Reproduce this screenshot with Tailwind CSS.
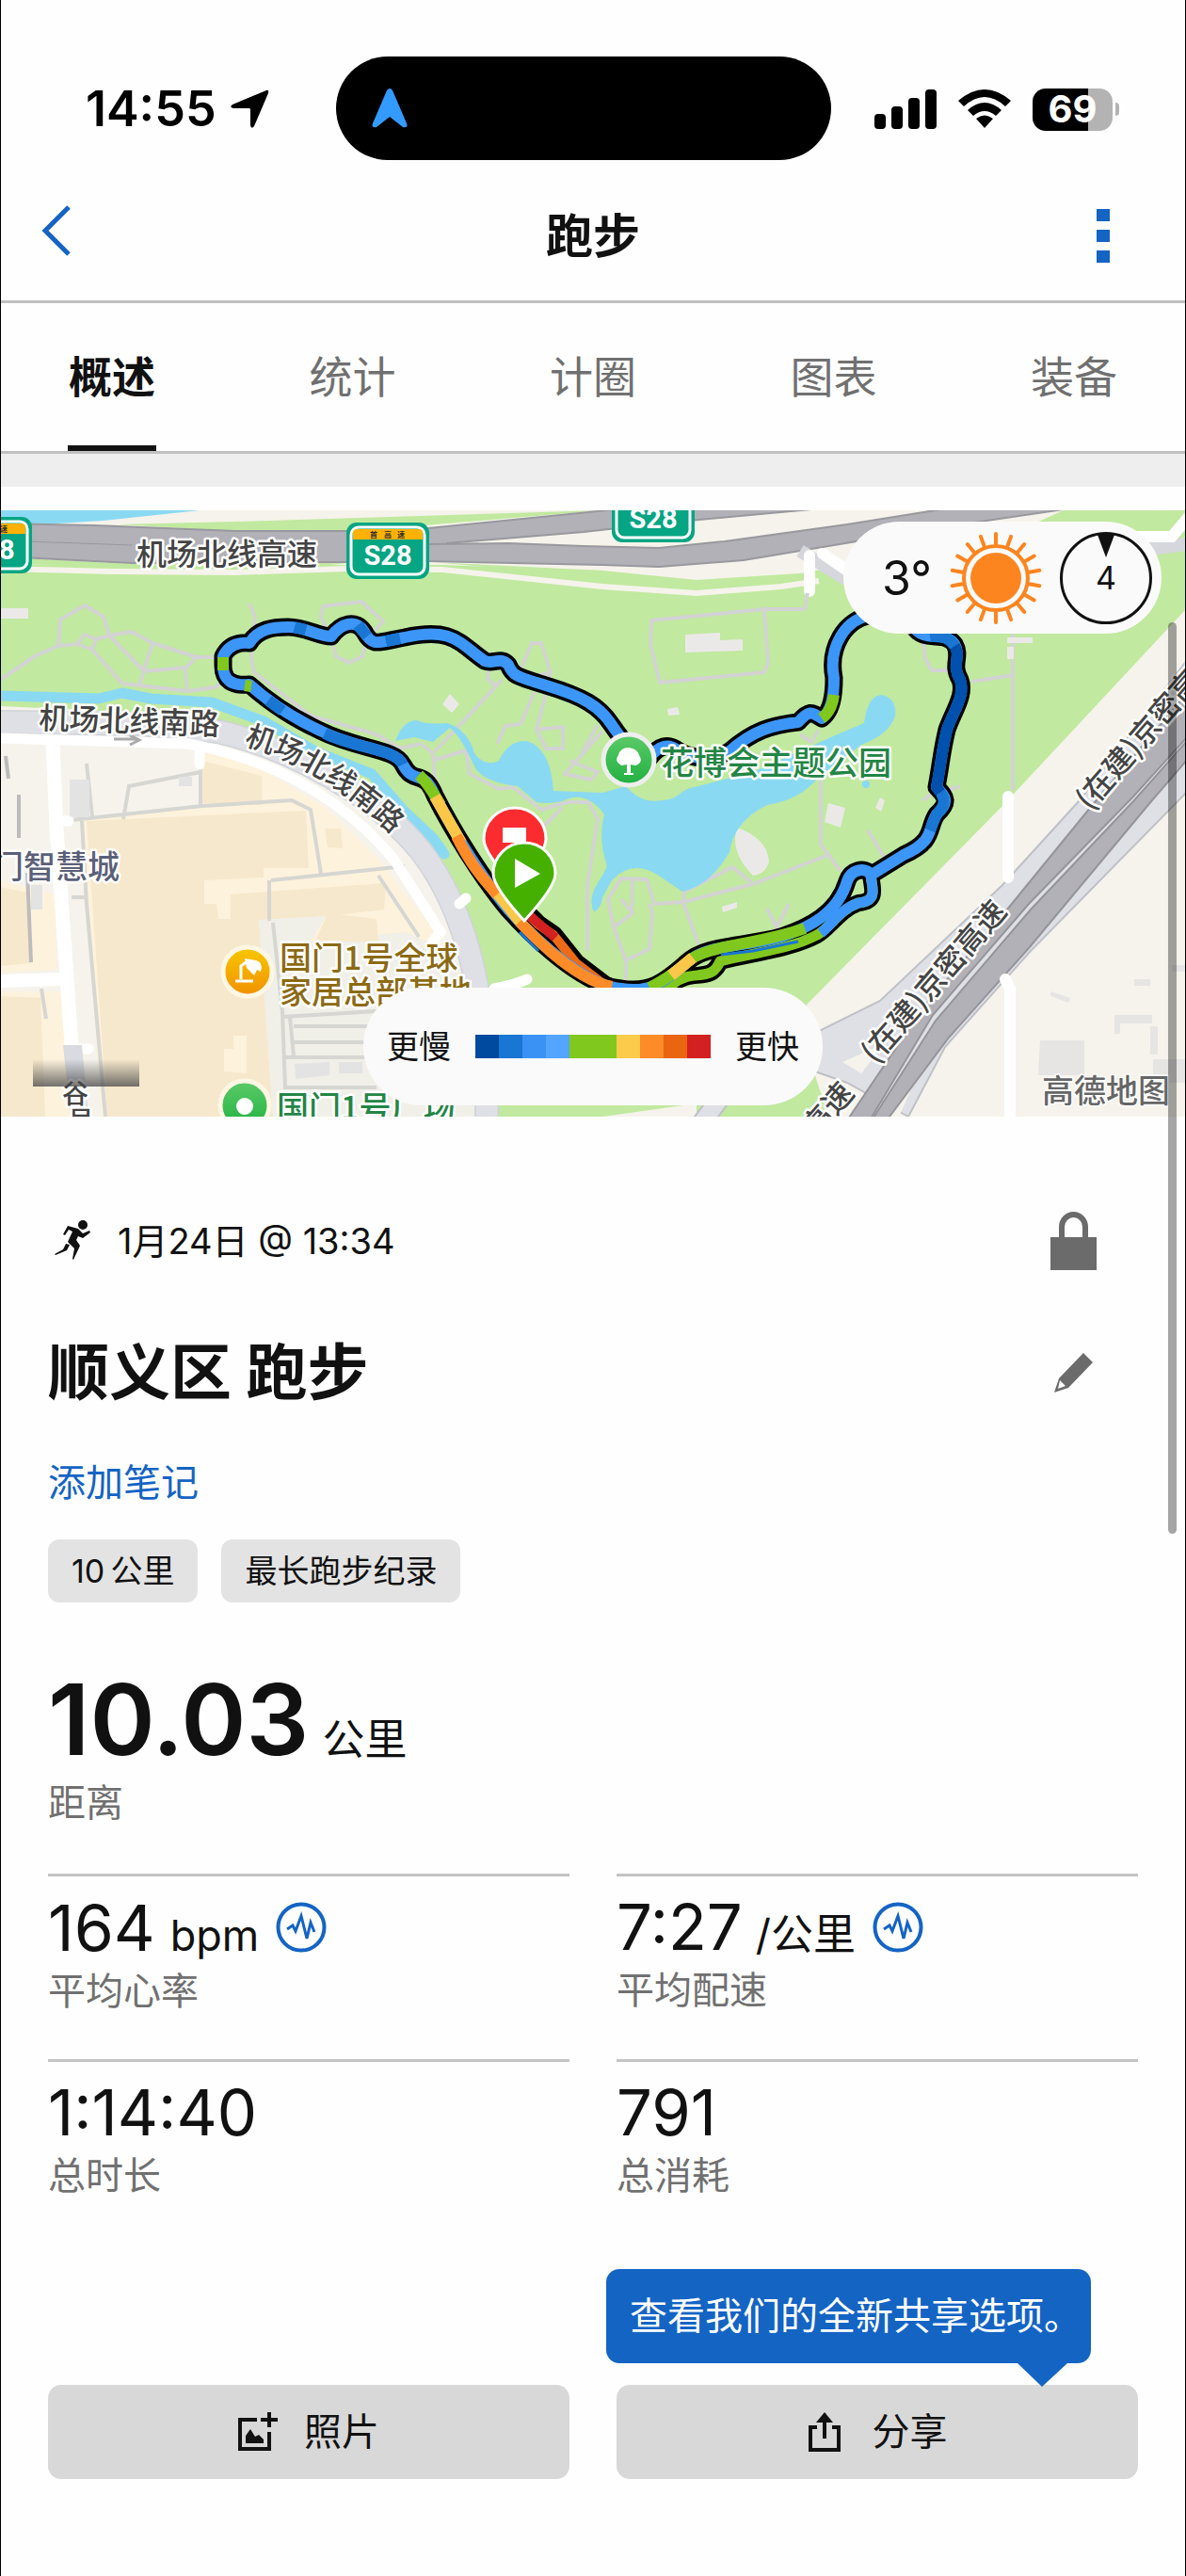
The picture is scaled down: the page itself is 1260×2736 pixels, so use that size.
<!DOCTYPE html>
<html lang="zh-CN">
<head>
<meta charset="utf-8">
<meta name="viewport" content="width=device-width, initial-scale=1">
<title>跑步</title>
<script src="https://cdn.jsdelivr.net/npm/@tailwindcss/browser@4"></script>
</head>
<body class="bg-white font-['Inter','Noto_Sans_CJK_SC',sans-serif] text-[#111]">
<div class="relative flex min-h-screen flex-col border-x border-black bg-[#fefefe]">

  <!-- Status bar -->
  <div class="relative flex h-[194px] items-center justify-between pt-[38px] pr-[70px] pl-[90px]">
    <div class="flex items-center gap-[14px] text-[52px] leading-none font-semibold text-black">
      <span>14:55</span>
      <svg class="h-[42px] w-[42px]" viewBox="0 0 42 42"><path d="M39 1 Q42 0 41 4 L26 39 Q23 43 22 38 V21 Q22 20 20 20 H4 Q-1 19 3 16 Z"/></svg>
    </div>
    <div class="absolute top-[60px] left-1/2 flex h-[110px] w-[526px] -translate-x-[273px] items-center rounded-full bg-black pl-[38px]">
      <svg class="h-[42px] w-[38px]" viewBox="0 0 38 42"><path fill="#339bff" d="M16 2 Q19 -2 22 2 L37 37 Q39 42 33 41 L19 30 L5 41 Q-1 42 1 37 Z"/></svg>
    </div>
    <div class="flex items-center gap-[22px]">
      <svg class="h-[42px] w-[66px]" viewBox="0 0 66 42"><rect y="26" width="12" height="16" rx="4"/><rect x="18" y="18" width="12" height="24" rx="4"/><rect x="36" y="9" width="12" height="33" rx="4"/><rect x="54" width="12" height="42" rx="4"/></svg>
      <svg class="h-[42px] w-[58px]" viewBox="0 0 58 42"><path d="M1 12 Q29 -12 57 12 L51 18 Q29 -2 7 18Z M11 22 Q29 6 47 22 L41 28 Q29 18 17 28Z M20 31 Q29 24 38 31 L29 41Z"/></svg>
      <div class="flex items-center gap-[3px]">
        <div class="flex h-[45px] w-[85px] items-center justify-center rounded-[14px] bg-linear-to-r from-black from-69% to-[#b3b3b3] to-69% text-[40px] leading-none font-bold text-white">69</div>
        <div class="h-[14px] w-[4px] rounded-r-full bg-[#b3b3b3]"></div>
      </div>
    </div>
  </div>

  <!-- Title bar -->
  <header class="flex h-[128px] items-center justify-between border-b-[3px] border-[#c0c0c0] px-[42px] pb-[12px]">
    <button aria-label="返回" class="w-[60px] pb-[12px]"><svg class="h-[56px] w-[32px]" viewBox="0 0 32 56" fill="none" stroke="#1464c4" stroke-width="5"><path d="M30 3 L5 28 L30 53"/></svg></button>
    <h1 class="text-[50px] leading-[60px] font-bold">跑步</h1>
    <button aria-label="更多" class="flex w-[60px] pl-[8px]"><svg class="h-[58px] w-[14px]" viewBox="0 0 14 58" fill="#1464c4"><path d="M0 0h14v13H0z M0 22h14v13H0z M0 44h14v13H0z"/></svg></button>
  </header>

  <!-- Tabs -->
  <nav class="flex h-[160px] justify-between border-b-[3px] border-[#c0c0c0] px-[71px] text-[46px] leading-[157px] text-[#707070]">
    <a href="#" class="flex w-[94px] justify-center border-b-[6px] border-[#111] font-bold whitespace-nowrap text-[#111]">概述</a>
    <a href="#" class="flex w-[94px] justify-center whitespace-nowrap">统计</a>
    <a href="#" class="flex w-[94px] justify-center whitespace-nowrap">计圈</a>
    <a href="#" class="flex w-[94px] justify-center whitespace-nowrap">图表</a>
    <a href="#" class="flex w-[94px] justify-center whitespace-nowrap">装备</a>
  </nav>
  <div class="h-[35px] bg-[#eee]"></div>

  <!-- Route map -->
  <section class="relative mt-[25px]" aria-label="路线地图">
    <svg class="block h-[644px] w-full" viewBox="0 542 1260 644" preserveAspectRatio="xMidYMid slice">
      <defs>
        <linearGradient id="fade" x1="0" y1="0" x2="0" y2="1"><stop offset="0" stop-color="#444" stop-opacity="0"/><stop offset="1" stop-color="#444" stop-opacity=".75"/></linearGradient>
        <linearGradient id="park" x1="0" y1="0" x2="0" y2="1"><stop offset="0" stop-color="#5ccb68"/><stop offset="1" stop-color="#20b040"/></linearGradient>
        <linearGradient id="home" x1="0" y1="0" x2="0" y2="1"><stop offset="0" stop-color="#f8c800"/><stop offset="1" stop-color="#f09000"/></linearGradient>
        <path id="southroad" d="M259 791 Q347 816 427 896"/>
        <path id="loop" d="M237 707 V697 Q245 681 265 683 C274 668 290 666 306 666 C325 666 338 676 352 676 C362 662 378 657 387 671 C396 688 402 682 430 677 C480 666 487 682 515 702 C524 706 532 697 540 706 C545 718 548 718 580 728 C620 740 637 750 650 770 C665 792 672 800 690 805 Q705 785 720 797 Q745 812 775 798 C800 776 820 770 848 767 C860 754 862 756 873 763 C884 755 886 738 886 720 C880 690 896 655 930 653 L970 665 C982 684 1003 669 1014 684 C1022 698 1010 705 1020 722 C1026 738 1013 755 1006 775 C1000 800 1000 810 995 836 C1004 846 1010 851 995 865 C985 880 994 893 960 908 L926 929 C918 920 904 924 900 936 C890 970 860 985 830 995 C790 1006 750 1003 730 1022 C705 1044 690 1055 660 1050 C625 1048 575 1005 540 966 C510 930 480 880 462 845 C450 815 440 835 428 812 C420 795 380 796 340 776 C310 762 285 745 265 727 Q237 730 237 707"/>
        <path id="second" d="M925 929 C926 942 934 957 912 959 C892 966 880 987 868 993 C840 1008 800 1012 765 1021 C755 1045 735 1028 715 1045 L690 1056"/>
        <path id="third" d="M563 973 L572 982 L588 993 L612 1023 L642 1046 L670 1060"/>
      </defs>
      <rect y="542" width="1260" height="644" fill="#c1e99f"/>

      <!-- Northern strip and motorway -->
      <path fill="#f5f3eb" d="M0 542H1130L1090 560L900 600L850 609L740 616L640 606L470 600H0Z"/>
      <path fill="#8ad9f3" d="M0 542H212L110 553L45 557H0Z"/>
      <path fill="#c1e99f" d="M125 557L250 554L640 542L370 565L250 564Z M0 592L140 599L370 598L300 605L0 599Z M460 597L640 613V606Z M1105 553L1160 542H1240L1180 551Z"/>
      <g fill="#b1b1b7" stroke="#98989e" stroke-width="2">
        <path d="M0 556L100 558L250 564L370 564L455 561L655 541H862L700 556L620 565L475 577L455 597L370 597L140 598L0 591Z"/>
        <path d="M455 578L540 577L620 580L700 582L770 575L900 557L1000 541H1130L1000 560L850 585L790 595L700 602L640 600L455 596Z"/>
      </g>
      <path fill="none" stroke="#98989e" d="M0 574L140 579"/>
      <path fill="none" stroke="#f5f3eb" stroke-width="6" d="M0 604L120 607L250 608L370 604L470 605L640 623L740 630L830 623L870 617"/>
      <path fill="none" stroke="#d5d7dc" stroke-width="14" d="M850 585L920 628M1260 578L1215 584"/>
      <path fill="none" stroke="#fff" stroke-width="12" stroke-linecap="round" d="M860 590V628M874 588L900 606M1190 570H1245L1262 550"/>

      <!-- Park footpaths and buildings -->
      <g fill="none" stroke="#d3d3d3" stroke-width="4" stroke-linejoin="round">
        <path d="M0 722L37 697L62 686L64 658L90 643L110 655L116 675L140 671L162 683L209 698H232M62 686L82 684L98 690L130 726L148 728L200 734L228 730L245 720M98 690L102 679L90 674L82 684M102 679L116 675L153 713L197 709L209 698M162 683L148 728M197 709L199 734M265 641L271 655L267 700L270 714L330 760L400 780L425 795L447 790L460 800L462 827L500 905"/>
        <path d="M348 670L341 655L343 644L384 639L407 660L398 670M353 683L357 697L371 704L385 697L388 685M520 706L518 721L527 729L462 798M527 729L533 722M562 720L585 714L575 683L565 683L550 718M568 735L553 769L537 771L528 790M585 716L570 775L580 795H598V772L570 775M640 777L600 822L628 828L635 820L605 808M462 807L495 797L499 822L530 838L545 836L575 860L592 855L605 852H625L635 870L624 940V1010M597 858L575 880"/>
        <path d="M858 630L855 647H812L692 659L691 685L701 725L812 714L816 704L812 648M1076 673V840M1076 717L1032 724M980 675L983 700L990 712H1010M850 780L862 788L870 775M872 800V897L893 925M880 908L800 939L726 958M798 937L778 921L727 947L726 958L742 1003M726 958L695 960L687 934L660 933L646 955L652 985L665 1020V1045M665 1020L690 1008L693 970L690 960M660 955L672 970L652 985M672 935L671 970M815 965L825 985L838 960M825 985V995M922 882L940 911M635 770L618 800M998 838L980 850M705 825L700 830M1005 840L1020 835"/>
        <path d="M1082 1050L1096 1060L1102 1110L1095 1145L1075 1160M1210 1132L1225 1143L1260 1145"/>
      </g>
      <path fill="#ebe9e8" d="M0 646H30V657H0Z M728 674L765 672V680L789 679V691L728 693Z M470 748L478 737L488 748L480 757Z M709 753L720 751L722 759L710 760Z M1070 677H1097V683H1070Z M1070 687H1077V700H1070Z M876 873L880 853L898 858L893 879Z M930 858L935 847L940 850L936 862Z M783 879Q815 890 817 915Q814 928 800 930Q775 905 783 879Z M767 963L783 958V964L768 969Z"/>

      <!-- Lake and canal -->
      <g fill="#8ad9f3">
        <path d="M420 787Q428 765 443 765Q452 770 475 768Q497 775 504 800Q515 815 530 808Q540 786 560 787Q585 795 588 840L640 842L665 835Q690 865 730 838L800 820L885 782L918 768Q922 738 937 738Q953 742 951 760Q945 780 915 791L870 825Q850 850 815 855Q780 872 775 905Q755 940 725 947L700 930Q672 912 650 935L632 968Q622 965 645 920Q635 890 642 865Q625 842 605 848Q590 855 570 852L550 835Q510 830 503 812Q490 783 478 773L460 788L440 783Z"/>
        <path d="M640 930Q622 955 632 968Q642 962 640 940Z"/>
        <circle cx="920" cy="833" r="4"/>
      </g>
      <path fill="#c1e99f" d="M680 838Q705 862 728 838L735 825H675Z"/>
      <path fill="none" stroke="#8ad9f3" stroke-width="11" stroke-linecap="round" stroke-linejoin="round" d="M0 739L105 742L130 736L160 742L225 746L280 766L335 798L395 822L430 862L460 890L472 907"/>

      <!-- South-west blocks -->
      <path fill="#f5f3eb" d="M0 750L150 757L240 770L330 800L400 845L450 900L490 970L515 1030L522 1186H0Z"/>
      <path fill="#fdf2dc" d="M216 798L270 812L345 857L400 910L470 1000L480 1186H108L85 870L216 856Z M0 935L58 950L60 1030L0 1033Z M0 1053H65L75 1186H0Z"/>
      <path fill="#f6e8cc" d="M92 872L325 861L328 925L410 938L408 966L350 973L275 977L290 1186H114Z M214 808L278 824V855L214 853Z M0 942L28 948L33 1023L0 1026Z M0 1058L43 1060L48 1186H0Z M345 880H362L364 901L348 900Z"/>
      <path fill="#fdf2dc" d="M217 935L280 932V922H328L408 930V938L245 950V976H232L230 960H217Z M248 1100H262V1140L238 1138V1114H248Z"/>
      <path fill="#f0efe8" d="M275 977L346 973L330 1000L430 990L475 1010L510 1050L515 1186H290Z"/>
      <path fill="#f6e8cc" d="M348 970L400 976L402 1000H335Z"/>
      <g fill="none" stroke="#d6d6d2" stroke-width="4"><path d="M213 790V856M213 820L137 835L131 870M92 811L98 867M76 871L215 856L310 850L330 860L341 928M87 872L92 960L112 1186M288 935L430 920M402 930L445 995M286 978V935M290 980L300 1075L303 1155H400M300 1080L400 1074M308 1080L312 1122M312 1090H395M312 1107H390M300 1123H390M76 953H92M44 1050L49 1082"/></g>
      <path fill="#e3e3e3" d="M74 828H95V868H74Z M190 825H204V835H190Z M313 1130L350 1128V1142L314 1146Z M360 1128H385V1140H360Z M33 940H45V966H33Z"/>
      <path fill="none" stroke="#bcbcbc" stroke-width="4" d="M6 803L9 827M20 844V890M29 927L33 1022"/>
      <path fill="none" stroke="#d0d2d8" stroke-width="26" d="M0 767L150 769L232 777C310 795 400 845 448 905Q520 1000 517 1186"/>
      <path fill="none" stroke="#dfe0e6" stroke-width="23" d="M0 767L150 769L232 777C310 795 400 845 448 905Q520 1000 517 1186"/>
      <g fill="none" stroke="#fff" stroke-linecap="round">
        <path stroke-width="11" d="M0 784L200 790C310 810 380 865 420 915L468 990L460 1000"/>
        <path stroke-width="15" d="M56 790L60 880L76 1110"/>
        <path stroke-width="14" d="M0 1042L66 1040"/>
        <path stroke-width="11" d="M212 795V812M65 872H73M80 1114H94M488 960L495 954M525 1050Q550 1045 560 1040"/>
      </g>
      <path fill="#d9dbe1" d="M67 1110H87L94 1186H75Z"/>
      <path fill="none" stroke="#aaa" stroke-width="3" d="M121 785H147M138 781L148 786L138 791"/>

      <!-- South-east expressway -->
      <path fill="#f5f3eb" d="M1260 647L1064 857L857 1067L862 1130L880 1186H1260Z M640 1186L740 1172V1186Z"/>
      <path fill="#dfe0e6" stroke="#bfc0c6" stroke-width="2" d="M1262 700L1147 850L1065 940L935 1063L860 1100V1136L900 1150L965 1186L1004 1112L1095 1010L1262 840Z M735 1190L765 1150H790L760 1190Z"/>
      <path fill="#f5f3eb" d="M895 1128L940 1108L915 1140Z M955 1186L985 1120L945 1186Z M1012 1120L985 1190H1080V1100L1060 1060Z"/>
      <path fill="#c1e99f" d="M905 1186L925 1160L915 1186Z"/>
      <g fill="#b1b1b7" stroke="#94949a" stroke-width="2">
        <path d="M1262 735L1163 852L1061 977L983 1067L900 1190H924L991 1078L1093 960L1204 846L1262 782Z"/>
        <path d="M1262 786L1205 850L1095 966L994 1084L926 1190H942L1008 1102L1093 1007L1224 850L1262 806Z"/>
      </g>
      <path fill="none" stroke="#fff" stroke-width="12" stroke-linecap="round" d="M1071 846V932M1068 1040L1073 1050V1186"/>
      <path fill="#e6e5e4" d="M1105 1105H1152V1142H1103Z M1184 1078H1224V1087H1190V1098H1184Z M1222 1090H1230V1120H1222Z M1116 1053L1137 1060L1135 1065L1116 1058Z M1205 1040H1222V1047H1205Z M1225 1125H1260V1150H1225Z M1245 1025H1260V1032H1245Z"/>

      <!-- Recorded route, coloured by pace -->
      <g fill="none" stroke-linejoin="round" stroke-linecap="round">
        <use href="#third" stroke="#000" stroke-width="20"/>
        <use href="#second" stroke="#000" stroke-width="18"/>
        <use href="#loop" stroke="#000" stroke-width="19"/>
        <use href="#third" stroke="#ee6a16" stroke-width="10"/>
        <use href="#second" stroke="#80c81e" stroke-width="11"/>
        <use href="#loop" stroke="#3b96f7" stroke-width="12"/>
      </g>
      <g fill="none" stroke-width="12" stroke-linejoin="round">
        <path stroke="#0050ad" d="M1014 686C1022 698 1010 705 1020 722C1026 738 1013 755 1006 775C1000 800 1000 810 995 836L999 842"/>
        <path stroke="#1976d2" d="M988 676Q1006 673 1014 686M999 842Q1008 852 995 865L988 882M428 812C420 795 380 796 345 779M300 755L285 744M313 666L325 669M380 664L390 676M410 681L425 678"/>
        <path stroke="#80c81e" d="M237 712V698M260 728L267 729M886 738Q884 755 873 763M855 986C800 1005 750 1003 730 1022Q712 1038 690 1049M445 823Q455 832 468 855"/>
        <path stroke="#fbc748" d="M736 1017L713 1036M462 846L490 895M525 945L555 982"/>
        <path stroke="#fc8b28" d="M485 888C500 918 512 932 528 950M552 979C585 1014 620 1042 650 1048"/>
        <path stroke="#d32020" stroke-width="10" d="M563 973L590 996"/>
        <path stroke="#3b96f7" stroke-width="11" d="M925 929C926 942 934 957 912 959C892 966 884 982 872 991"/>
        <path stroke="#1976d2" stroke-width="3" d="M848 1000L800 1010L766 1014M552 990L572 1010"/>
      </g>

      <!-- Start and finish pins -->
      <g stroke="#fff" stroke-width="3">
        <path fill="#fb2c30" d="M547 941Q514 906 514 891A33 33 0 0 1 580 891Q580 906 547 941Z"/>
        <path fill="#fff" stroke="none" d="M534 879H559V895H534Z"/>
        <path fill="#45b000" d="M557 978Q524 942 524 928A33 33 0 0 1 590 928Q590 942 557 978Z"/>
      </g>
      <path fill="#fff" d="M547 912V943L574 928Z"/>

      <!-- Place icons -->
      <circle cx="668" cy="807" r="27" fill="url(#park)" stroke="#eee" stroke-width="5"/>
      <path fill="#fff" d="M668 794Q677 795 679 802Q684 810 675 813L670 812V821H673V823H663V821H666V812L660 813Q652 808 657 802Q659 794 668 794Z"/>
      <circle cx="263" cy="1032" r="26" fill="url(#home)" stroke="#fff6e4" stroke-width="5"/>
      <path d="M250 1042H269M256 1040V1026L264 1020" fill="none" stroke="#fff" stroke-width="3"/><path fill="#fff" d="M260 1018L272 1020Q280 1022 277 1032L273 1030L270 1036L262 1028Z"/>
      <circle cx="260" cy="1174" r="26" fill="url(#park)" stroke="#fff6e4" stroke-width="5"/><circle cx="260" cy="1175" r="9" fill="#fff"/>

      <!-- Road shields -->
      <g font-family="Roboto, sans-serif" font-weight="700" font-size="29" text-anchor="middle">
        <g id="shield"><rect x="368" y="555" width="88" height="60" rx="11" fill="#06a583"/><rect x="373" y="560" width="78" height="50" rx="8" fill="#06a583" stroke="#fff" stroke-width="3"/><path fill="#feb100" d="M375 573V566Q375 562 380 562H444Q449 562 449 566V573Z"/><text x="412" y="600" fill="#fff">S28</text><text x="397 412 426" y="571" font-size="8" fill="#333" font-family="Noto Sans CJK SC">首高速</text></g>
        <use href="#shield" x="-422" y="-6"/>
        <use href="#shield" x="282" y="-39"/>
      </g>

      <!-- Map labels -->
      <g font-family="Noto Sans CJK SC, sans-serif" font-weight="500" font-size="32" fill="#444" stroke="#fffffe" stroke-width="5" stroke-linejoin="round" paint-order="stroke">
        <text x="145" y="600">机场北线高速</text>
        <text x="41" y="774" transform="rotate(2 41 774)">机场北线南路</text>
        <text font-size="31"><textPath href="#southroad">机场北线南路</textPath></text>
        <text x="-9" y="933" font-size="34" fill="#5a6078">门智慧城</text>
        <text x="930" y="1131" transform="rotate(-49 930 1131)">(在建)京密高速</text>
        <text x="1158" y="862" transform="rotate(-49 1158 862)">(在建)京密高速</text>
        <text x="768" y="1324" transform="rotate(-49 768 1324)">(在建)京密高速</text>
        <text x="66" y="1172" font-size="28">谷</text><text x="72" y="1201" font-size="28">号</text>
        <g font-size="34" fill="#8c6a14"><text x="297" y="1030">国门1号全球</text><text x="297" y="1066">家居总部基地</text></g>
        <g fill="#238545"><text x="702" y="823" font-size="35">花博会主题公园</text><text x="294" y="1189" font-size="34">国门1号广场</text></g>
        <text x="1107" y="1171" font-size="34" fill="#666" stroke-width="3">高德地图</text>
      </g>
      <rect x="35" y="1125" width="113" height="29" fill="url(#fade)"/>
    </svg>

    <div class="absolute top-[12px] right-[25px] flex h-[119px] items-center gap-[19px] rounded-full bg-[#fafafa] pr-[10px] pl-[41px]">
      <span class="text-[50px] leading-none">3°</span>
      <svg class="h-[98px] w-[98px]" viewBox="-49 -49 98 98" fill="none" stroke="#fd851f" stroke-width="4" stroke-linecap="round">
        <circle r="27" fill="#fd851f" stroke="none"/><circle r="34"/>
        <path d="M0 -36V-47M0 36V47"/><path d="M0 -36V-47M0 36V47" transform="rotate(20)"/><path d="M0 -36V-47M0 36V47" transform="rotate(40)"/><path d="M0 -36V-47M0 36V47" transform="rotate(60)"/><path d="M0 -36V-47M0 36V47" transform="rotate(80)"/>
        <path d="M0 -36V-47M0 36V47" transform="rotate(100)"/><path d="M0 -36V-47M0 36V47" transform="rotate(120)"/><path d="M0 -36V-47M0 36V47" transform="rotate(140)"/><path d="M0 -36V-47M0 36V47" transform="rotate(160)"/>
      </svg>
      <div class="relative flex h-[98px] w-[98px] items-center justify-center rounded-full border-[3px] border-[#111] text-[34px] leading-none">4
        <svg class="absolute top-0 left-1/2 h-[24px] w-[18px] -translate-x-1/2" viewBox="0 0 18 24"><path d="M0 0H18L9 24Z" fill="#111"/></svg>
      </div>
    </div>

    <div class="absolute inset-x-0 bottom-[12px] flex justify-center">
      <div class="flex h-[125px] items-center gap-[26px] rounded-full bg-[#fafafa] px-[25px] text-[34px] leading-none">
        <span>更慢</span>
        <div class="grid h-[25px] w-[250px] grid-cols-10">
          <i class="bg-[#004a9f]"></i><i class="bg-[#1976d2]"></i><i class="bg-[#3b92f5]"></i><i class="bg-[#54a5ff]"></i><i class="col-span-2 bg-[#80c81e]"></i><i class="bg-[#fbcb4c]"></i><i class="bg-[#fc8b28]"></i><i class="bg-[#ea650f]"></i><i class="bg-[#d32020]"></i>
        </div>
        <span>更快</span>
      </div>
    </div>
  </section>

  <!-- Activity details -->
  <main class="flex grow flex-col px-[50px]">
    <div class="mt-[92px] flex h-[80px] items-center justify-between pr-[43px]">
      <div class="flex items-center gap-[28px] pl-[6px] text-[38px] leading-none">
        <svg class="h-[44px] w-[40px]" viewBox="0 0 40 44" fill="#111"><circle cx="31" cy="5" r="5"/><path d="M15 6L26 9L31 14L38 11L39 13L31 19L26 17L24 21L28 27L21 42L20 41L22 30L15 23L20 12L16 10L12 16L10 15Z M13 25L17 26L14 32L2 37L1 36L10 31Z"/></svg>
        <span>1月24日 @ 13:34</span>
      </div>
      <svg class="h-[64px] w-[50px]" viewBox="0 0 50 64"><path fill="#6b6b6b" d="M0 28H49V63H0Z"/><path fill="none" stroke="#6b6b6b" stroke-width="6" d="M12 30V17A12.500 13 0 0 1 37 17V30"/></svg>
    </div>
    <div class="mt-[52px] flex h-[96px] items-center justify-between pr-[46px]">
      <h2 class="text-[65px] leading-[96px] font-bold">顺义区 跑步</h2>
      <button aria-label="编辑"><svg class="h-[44px] w-[44px]" viewBox="0 0 44 44" fill="#6b6b6b"><path fill-rule="evenodd" d="M32 1L42 11L16 38L1 43L6 28Z M7 30L5 39L13 36Z"/></svg></button>
    </div>
    <a href="#" class="mt-[39px] self-start text-[40px] leading-[60px] text-[#1464c4]">添加笔记</a>
    <div class="mt-[30px] flex gap-[25px] text-[34px] leading-[67px]">
      <span class="rounded-[12px] bg-[#e3e3e3] px-[25px]">10&thinsp;公里</span>
      <span class="rounded-[12px] bg-[#e3e3e3] px-[25px]">最长跑步纪录</span>
    </div>

    <dl class="mt-[62px] flex flex-col">
      <dd class="flex items-baseline gap-[14px]"><span class="text-[105px] leading-[124px] font-semibold">10.03</span><span class="text-[45px]">公里</span></dd>
      <dt class="order-last text-[40px] leading-[54px] text-[#707070]">距离</dt>
    </dl>
    <div class="mt-[48px] grid grid-cols-2 gap-x-[50px]">
      <dl class="flex h-[197px] flex-col border-t-[3px] border-[#c4c4c4] pt-[12px]">
        <dd class="flex items-center gap-[18px]"><span class="flex items-baseline gap-[16px]"><span class="text-[68px] leading-[84px]">164</span><span class="text-[45px]">bpm</span></span>
          <svg class="h-[54px] w-[54px]" viewBox="0 0 54 54" fill="none" stroke="#1464c4" stroke-width="3"><circle cx="27" cy="27" r="24.500" stroke-width="4"/><path d="M12 29L18 25L21 31L27 15L33 39L37 22L41 32"/></svg></dd>
        <dt class="text-[40px] leading-[50px] text-[#707070]">平均心率</dt>
      </dl>
      <dl class="flex h-[197px] flex-col border-t-[3px] border-[#c4c4c4] pt-[12px]">
        <dd class="flex items-center gap-[18px]"><span class="flex items-baseline gap-[14px]"><span class="text-[67px] leading-[84px]">7:27</span><span class="text-[45px] leading-none">/公里</span></span>
          <svg class="h-[54px] w-[54px]" viewBox="0 0 54 54" fill="none" stroke="#1464c4" stroke-width="3"><circle cx="27" cy="27" r="24.500" stroke-width="4"/><path d="M12 29L18 25L21 31L27 15L33 39L37 22L41 32"/></svg></dd>
        <dt class="text-[40px] leading-[50px] text-[#707070]">平均配速</dt>
      </dl>
      <dl class="flex h-[197px] flex-col border-t-[3px] border-[#c4c4c4] pt-[12px]">
        <dd class="text-[67px] leading-[84px]">1:14:40</dd>
        <dt class="text-[40px] leading-[50px] text-[#707070]">总时长</dt>
      </dl>
      <dl class="flex h-[197px] flex-col border-t-[3px] border-[#c4c4c4] pt-[12px]">
        <dd class="text-[67px] leading-[84px]">791</dd>
        <dt class="text-[40px] leading-[50px] text-[#707070]">总消耗</dt>
      </dl>
    </div>

    <!-- Actions -->
    <div class="mt-auto grid grid-cols-2 gap-x-[50px] pb-[103px] text-[40px] leading-[100px]">
      <button class="flex items-center justify-center gap-[26px] rounded-[14px] bg-[#d8d8d8]">
        <svg class="h-[44px] w-[44px]" viewBox="0 0 44 44"><path fill="none" stroke="#111" stroke-width="4" d="M20 9H2V40H33V22M33 1V17M24 9H42"/><path fill="#111" d="M8 34V26L13 19L18 27L22 25L27 30V34Z"/></svg>
        照片
      </button>
      <div class="relative flex">
        <div role="tooltip" class="absolute right-[50px] bottom-[123px] rounded-[14px] bg-[#1464c4] pr-[10px] pl-[25px] whitespace-nowrap text-white">查看我们的全新共享选项。
          <svg class="absolute top-full right-[25px] h-[25px] w-[53px]" viewBox="0 0 53 25"><path fill="#1464c4" d="M0 0H53L26 25Z"/></svg>
        </div>
        <button class="flex grow items-center justify-center gap-[33px] rounded-[14px] bg-[#d8d8d8]">
          <svg class="h-[44px] w-[36px]" viewBox="0 0 36 44"><path fill="none" stroke="#111" stroke-width="4" d="M10 17H3V41H33V17H26M18 29V7"/><path fill="#111" d="M9 12L18 1L27 12Z"/></svg>
          分享
        </button>
      </div>
    </div>
  </main>

  <!-- Scroll indicator -->
  <div class="absolute top-[661px] right-[9px] h-[968px] w-[9px] rounded-full bg-black/35"></div>
</div>
</body>
</html>
